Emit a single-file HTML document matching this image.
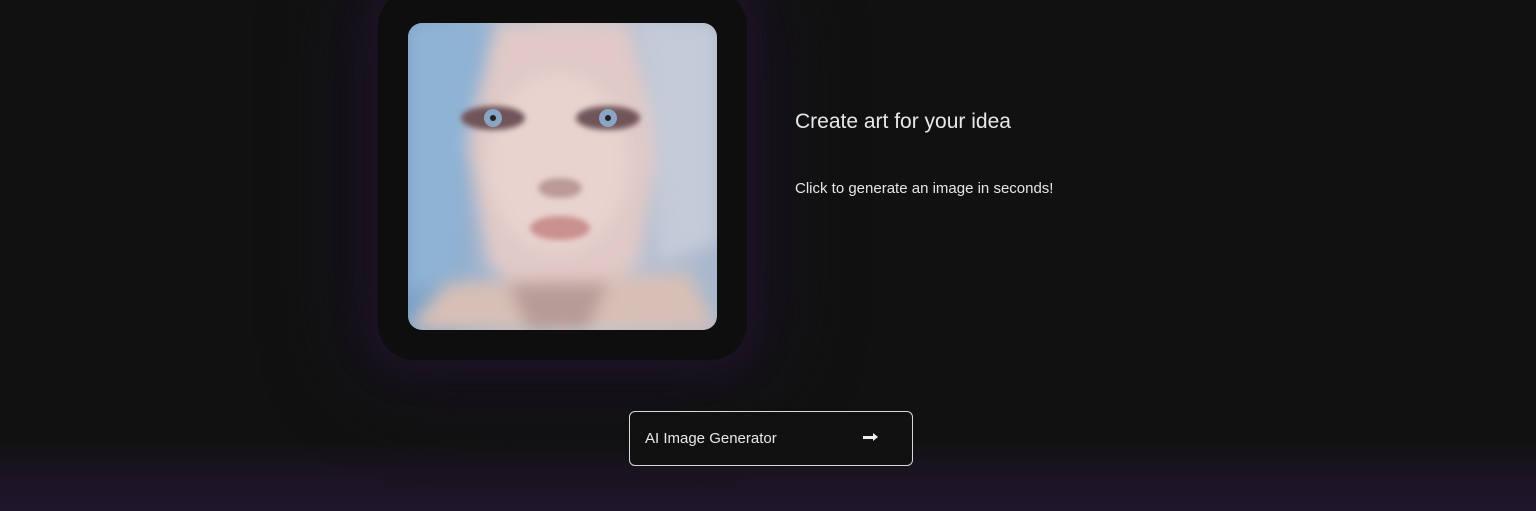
<!DOCTYPE html>
<html><head><style>
html,body{margin:0;padding:0;width:1536px;height:511px;overflow:hidden}
body{background:#111111;position:relative;font-family:"Liberation Sans",sans-serif}
.glowb{position:absolute;left:0;right:0;top:440px;height:71px;background:linear-gradient(#111 0%,#1a1421 45%,#20152b 100%)}
.frame{position:absolute;left:378px;top:-10px;width:369px;height:370px;background:#0e0e0e;border-radius:36px;box-shadow:0 0 30px 10px #1d1428,0 0 80px 30px #17121d}
.img{position:absolute;left:408px;top:23px;width:309px;height:307px;border-radius:14px;overflow:hidden}
h2{position:absolute;left:795px;top:110px;margin:0;font-weight:normal;font-size:21px;color:#e8e8e8}
p{position:absolute;left:795px;top:180px;margin:0;font-size:15px;color:#e6e6e6}
.btn{position:absolute;left:629px;top:411px;width:282px;height:53px;border:1px solid #d8d8d8;border-radius:6px;background:#111;color:#e8e8e8;font-size:15px}
.btn span{position:absolute;left:15px;top:18px}
.btn b{position:absolute;left:233px;top:24px;width:11px;height:3px;background:#eee}
.btn b:after{content:"";position:absolute;right:-4px;top:-3px;border-left:5px solid #eee;border-top:4.5px solid transparent;border-bottom:4.5px solid transparent}
</style></head><body>
<div class="glowb"></div>
<div class="frame"></div>
<div class="img">
<svg width="309" height="307" viewBox="0 0 309 307">
<defs>
<filter id="b"><feGaussianBlur stdDeviation="8"/></filter>
<filter id="s"><feGaussianBlur stdDeviation="3"/></filter>
<linearGradient id="bg" x1="0" x2="1"><stop offset="0" stop-color="#7ba1c6"/><stop offset=".5" stop-color="#c8c9d6"/><stop offset="1" stop-color="#a8b7cc"/></linearGradient>
</defs>
<rect width="309" height="307" fill="url(#bg)"/>
<g filter="url(#b)">
<path d="M90 0 L220 0 L250 120 L230 240 L180 280 L130 280 L80 240 L60 120 Z" fill="#e0c9c6"/>
<ellipse cx="150" cy="140" rx="70" ry="90" fill="#e8d3cf"/>
<path d="M40 260 L280 250 L309 307 L0 307 Z" fill="#d7bfb6"/>
<path d="M100 260 L200 260 L180 307 L120 307 Z" fill="#b79b96"/>
<path d="M0 0 L80 0 L60 120 L50 250 L0 270 Z" fill="#8fb3d4"/>
<path d="M230 0 L309 0 L309 220 L250 240 L245 120 Z" fill="#c5cbd8"/>
</g>
<g filter="url(#s)">
<ellipse cx="85" cy="95" rx="32" ry="12" fill="#6f5458"/>
<ellipse cx="200" cy="95" rx="32" ry="12" fill="#6f5458"/>
<ellipse cx="152" cy="165" rx="22" ry="10" fill="#bc9a96"/>
<ellipse cx="152" cy="205" rx="30" ry="12" fill="#c9918f"/>
</g>
<circle cx="85" cy="95" r="9" fill="#8aa5c3"/><circle cx="85" cy="95" r="3" fill="#222"/>
<circle cx="200" cy="95" r="9" fill="#8aa5c3"/><circle cx="200" cy="95" r="3" fill="#222"/>
</svg>
</div>
<h2>Create art for your idea</h2>
<p>Click to generate an image in seconds!</p>
<div class="btn"><span>AI Image Generator</span><b></b></div>
</body></html>
